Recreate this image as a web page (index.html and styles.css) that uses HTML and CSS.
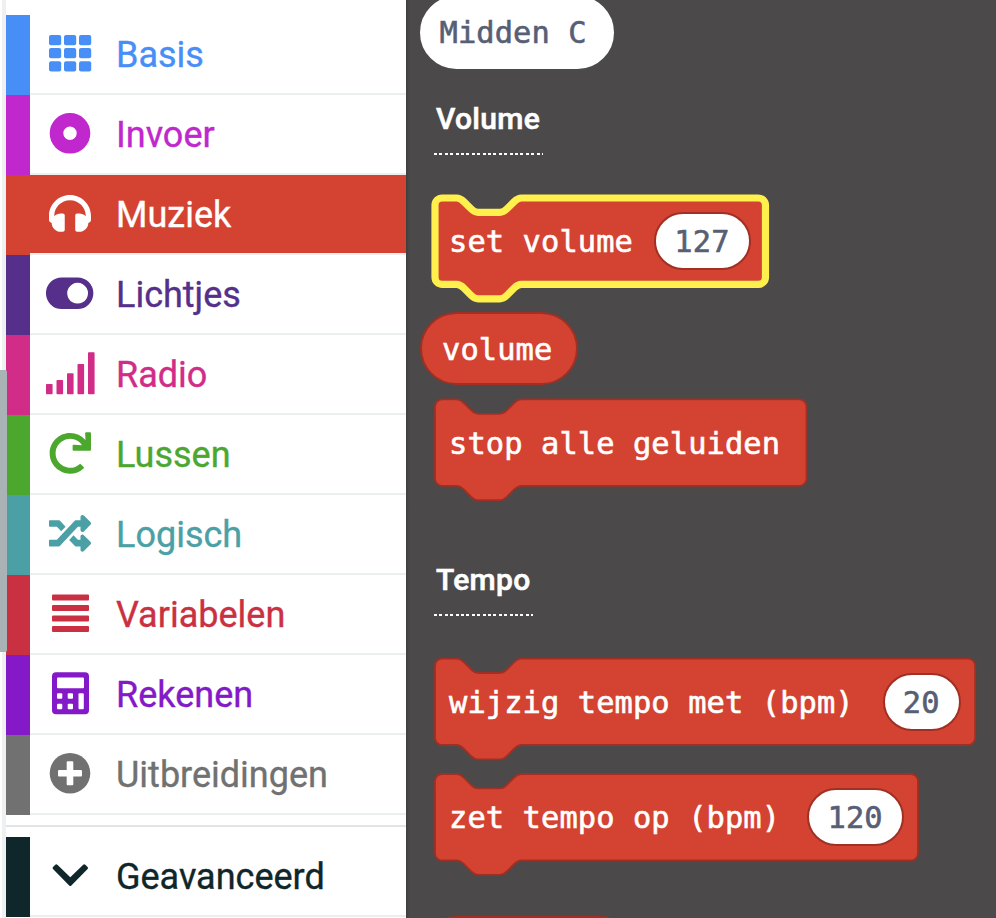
FILE: index.html
```html
<!DOCTYPE html>
<html lang="nl">
<head>
<meta charset="utf-8">
<title>Muziek</title>
<link rel="stylesheet" href="styles.css">
</head>
<body>
<div class="editor">
  <nav class="toolbox">
    <div class="category basis"><div class="cell"><svg class="icon" viewBox="0 0 50 50"><g><rect x="4" y="6" width="12.2" height="10.3" rx="2"/><rect x="19" y="6" width="12.2" height="10.3" rx="2"/><rect x="34" y="6" width="12.2" height="10.3" rx="2"/><rect x="4" y="19" width="12.2" height="10.3" rx="2"/><rect x="19" y="19" width="12.2" height="10.3" rx="2"/><rect x="34" y="19" width="12.2" height="10.3" rx="2"/><rect x="4" y="32.2" width="12.2" height="10.3" rx="2"/><rect x="19" y="32.2" width="12.2" height="10.3" rx="2"/><rect x="34" y="32.2" width="12.2" height="10.3" rx="2"/></g></svg><span>Basis</span></div></div>
    <div class="category invoer"><div class="cell"><svg class="icon" viewBox="0 0 50 50"><circle cx="25" cy="24.3" r="13.5" fill="none" stroke="currentColor" stroke-width="13.6"/></svg><span>Invoer</span></div></div>
    <div class="category muziek selected"><div class="cell"><svg class="icon" viewBox="0 0 50 50"><path transform="translate(4 3.4) scale(.082)" d="M256 32C114.52 32 0 146.497 0 288v48a32 32 0 0 0 17.689 28.622l14.383 7.191C34.083 431.903 83.421 480 144 480h24c13.255 0 24-10.745 24-24V280c0-13.255-10.745-24-24-24h-24c-31.342 0-59.671 12.879-80 33.627V288c0-105.869 86.131-192 192-192s192 86.131 192 192v1.627C427.671 268.879 399.342 256 368 256h-24c-13.255 0-24 10.745-24 24v176c0 13.255 10.745 24 24 24h24c60.579 0 109.917-48.098 111.928-108.187l14.382-7.191A32 32 0 0 0 512 336v-48c0-141.479-114.496-256-256-256z"/></svg><span>Muziek</span></div></div>
    <div class="category lichtjes"><div class="cell"><svg class="icon" viewBox="0 0 50 50"><path fill-rule="evenodd" d="M16.7 8.5H32.6a15.75 15.75 0 0 1 0 31.5H16.7a15.75 15.75 0 0 1 0-31.5zM32.6 13.8a10.4 10.4 0 1 0 .01 0z"/></svg><span>Lichtjes</span></div></div>
    <div class="category radio"><div class="cell"><svg class="icon" viewBox="0 0 50 50"><rect x="1" y="35" width="6.6" height="10.2" rx=".8"/><rect x="11.5" y="31" width="6.6" height="14.2" rx=".8"/><rect x="22" y="24.3" width="6.6" height="20.9" rx=".8"/><rect x="32.5" y="15" width="6.6" height="30.2" rx=".8"/><rect x="43" y="3.3" width="6.6" height="41.9" rx=".8"/></svg><span>Radio</span></div></div>
    <div class="category lussen"><div class="cell"><svg class="icon" viewBox="0 0 50 50"><path transform="translate(4 3.3) scale(.082)" d="M500.33 0h-47.41a12 12 0 0 0-12 12.57l4 82.76A247.42 247.42 0 0 0 256 8C119.34 8 7.9 119.53 8 256.19 8.1 393.07 119.1 504 256 504a247.1 247.1 0 0 0 166.18-63.91 12 12 0 0 0 .48-17.43l-34-34a12 12 0 0 0-16.38-.55A176 176 0 1 1 402.1 157.8l-101.53-4.87a12 12 0 0 0-12.57 12v47.41a12 12 0 0 0 12 12h200.33a12 12 0 0 0 12-12V12a12 12 0 0 0-12-12z"/></svg><span>Lussen</span></div></div>
    <div class="category logisch"><div class="cell"><svg class="icon" viewBox="0 0 50 50"><path transform="translate(4 3.3) scale(.082)" d="M504.971 359.029c9.373 9.373 9.373 24.569 0 33.941l-80 79.984c-15.01 15.01-40.971 4.49-40.971-16.971V416h-58.785a12.004 12.004 0 0 1-8.773-3.812l-70.556-75.596 53.333-57.143L352 336h32v-39.981c0-21.438 25.943-31.998 40.971-16.971l80 79.981zM12 176h84l52.781 56.551 53.333-57.143-70.556-75.596A11.999 11.999 0 0 0 122.785 96H12c-6.627 0-12 5.373-12 12v56c0 6.627 5.373 12 12 12zm372 0v39.984c0 21.46 25.961 31.98 40.971 16.971l80-79.984c9.373-9.373 9.373-24.569 0-33.941l-80-79.981C409.943 24.021 384 34.582 384 56.019V96h-58.785a12.004 12.004 0 0 0-8.773 3.812L96 336H12c-6.627 0-12 5.373-12 12v56c0 6.627 5.373 12 12 12h110.785c3.326 0 6.503-1.381 8.773-3.812L352 176h32z"/></svg><span>Logisch</span></div></div>
    <div class="category variabelen"><div class="cell"><svg class="icon" viewBox="0 0 50 50"><rect x="7" y="5.4" width="37" height="6" rx="1"/><rect x="7" y="15.9" width="37" height="6" rx="1"/><rect x="7" y="26.5" width="37" height="6" rx="1"/><rect x="7" y="37" width="37" height="6" rx="1"/></svg><span>Variabelen</span></div></div>
    <div class="category rekenen"><div class="cell"><svg class="icon" viewBox="0 0 50 50"><rect x="7" y="3.3" width="37" height="42" rx="4"/><g fill="#fff"><rect x="12" y="8.6" width="27" height="10.6" rx="1"/><rect x="12" y="24.3" width="5.3" height="5.4" rx="1"/><rect x="22.7" y="24.3" width="5.3" height="5.4" rx="1"/><rect x="12" y="34.8" width="5.3" height="5.4" rx="1"/><rect x="22.7" y="34.8" width="5.3" height="5.4" rx="1"/><rect x="33.5" y="24.3" width="5.3" height="15.9" rx="1"/></g></svg><span>Rekenen</span></div></div>
    <div class="category uitbreidingen"><div class="cell"><svg class="icon" viewBox="0 0 50 50"><circle cx="25" cy="24.2" r="20.3"/><path fill="#fff" d="M22.7 12.2h4.6a1 1 0 0 1 1 1v7.7h7.7a1 1 0 0 1 1 1v4.6a1 1 0 0 1-1 1h-7.7v7.7a1 1 0 0 1-1 1h-4.6a1 1 0 0 1-1-1v-7.7H14a1 1 0 0 1-1-1v-4.6a1 1 0 0 1 1-1h7.7v-7.7a1 1 0 0 1 1-1z"/></svg><span>Uitbreidingen</span></div></div>
    <div class="separator"></div>
    <div class="category geavanceerd"><div class="cell"><svg class="icon" viewBox="0 0 50 50"><path d="M8 18.1a1.5 1.5 0 0 1 0-2l2.3-2.3a1.5 1.5 0 0 1 2.1 0L25.3 26.3 38.2 13.8a1.5 1.5 0 0 1 2.1 0l2.3 2.3a1.5 1.5 0 0 1 0 2L26.4 34.4a1.5 1.5 0 0 1-2.2 0z"/></svg><span>Geavanceerd</span></div></div>
    <div class="scroll-thumb"></div>
  </nav>

  <main class="flyout">
    <div class="reporter note">Midden C</div>
    <h2 class="group">Volume</h2>
    <div class="block set-volume">
      <svg class="shape" width="345" height="116"><path class="glow" transform="translate(4 4) scale(1.8)" d="M0 4a4 4 0 0 1 4-4h8c2 0 3 1 4 2l4 4c1 1 2 2 4 2h12c2 0 3-1 4-2l4-4c1-1 2-2 4-2h131.6a4 4 0 0 1 4 4v40a4 4 0 0 1-4 4H48c-2 0-3 1-4 2l-4 4c-1 1-2 2-4 2H24c-2 0-3-1-4-2l-4-4c-1-1-2-2-4-2H4a4 4 0 0 1-4-4z"/></svg>
      <span>set volume</span><span class="value">127</span>
    </div>
    <div class="reporter volume">volume</div>
    <div class="block stop">
      <svg class="shape" width="385" height="116"><path transform="translate(4 4.4) scale(1.8)" d="M0 4a4 4 0 0 1 4-4h8c2 0 3 1 4 2l4 4c1 1 2 2 4 2h12c2 0 3-1 4-2l4-4c1-1 2-2 4-2h154.4a4 4 0 0 1 4 4v40a4 4 0 0 1-4 4H48c-2 0-3 1-4 2l-4 4c-1 1-2 2-4 2H24c-2 0-3-1-4-2l-4-4c-1-1-2-2-4-2H4a4 4 0 0 1-4-4z"/></svg>
      <span>stop alle geluiden</span>
    </div>
    <h2 class="group tempo">Tempo</h2>
    <div class="block change">
      <svg class="shape" width="552" height="116"><path transform="translate(4 3.6) scale(1.8)" d="M0 4a4 4 0 0 1 4-4h8c2 0 3 1 4 2l4 4c1 1 2 2 4 2h12c2 0 3-1 4-2l4-4c1-1 2-2 4-2h248.1a4 4 0 0 1 4 4v40a4 4 0 0 1-4 4H48c-2 0-3 1-4 2l-4 4c-1 1-2 2-4 2H24c-2 0-3-1-4-2l-4-4c-1-1-2-2-4-2H4a4 4 0 0 1-4-4z"/></svg>
      <span>wijzig tempo met (bpm)</span><span class="value">20</span>
    </div>
    <div class="block put">
      <svg class="shape" width="495" height="116"><path transform="translate(4 4) scale(1.8)" d="M0 4a4 4 0 0 1 4-4h8c2 0 3 1 4 2l4 4c1 1 2 2 4 2h12c2 0 3-1 4-2l4-4c1-1 2-2 4-2h216.3a4 4 0 0 1 4 4v40a4 4 0 0 1-4 4H48c-2 0-3 1-4 2l-4 4c-1 1-2 2-4 2H24c-2 0-3-1-4-2l-4-4c-1-1-2-2-4-2H4a4 4 0 0 1-4-4z"/></svg>
      <span>zet tempo op (bpm)</span><span class="value">120</span>
    </div>
    <div class="reporter next"></div>
  </main>
</div>
</body>
</html>
```
FILE: styles.css
```css
* {
  box-sizing: border-box;
}

body {
  margin: 0;
  overflow: hidden;
}

.editor {
  display: flex;
  width: 996px;
  height: 918px;
  overflow: hidden;
}

/* Category list */
.toolbox {
  position: relative;
  flex: none;
  width: 406px;
  height: 918px;
  padding: 15px 0 0 6px;
  background: linear-gradient(to right, #fff 2px, #eff0f2 2px, #eff0f2 6px, #fff 6px);
  font-family: Roboto, sans-serif;
  font-size: 36px;
}

.scroll-thumb {
  position: absolute;
  left: 0;
  top: 370px;
  width: 7px;
  height: 282px;
  background: #a9b3b5;
  border-radius: 0 2px 2px 0;
}

.category {
  height: 80px;
  padding-left: 24px;
  background: var(--color);
  color: var(--color);
}

.cell {
  display: flex;
  align-items: center;
  gap: 21px;
  height: 80px;
  padding-left: 15px;
  background: #fff;
  border-bottom: 2px solid #ebefef;
}

.cell span {
  padding-top: 2px;
  line-height: 42px;
  -webkit-text-stroke: 0.35px currentColor;
}

.selected .cell {
  background: var(--color);
  background-clip: padding-box;
  color: #fff;
}

.icon {
  flex: none;
  width: 50px;
  height: 50px;
  fill: currentColor;
}

.separator {
  height: 22px;
  padding-top: 10px;
}

.separator::before {
  content: "";
  display: block;
  height: 2px;
  background: #e2e3e4;
}

.basis { --color: #478ff7; }
.invoer { --color: #c028cd; }
.muziek { --color: #d44332; }
.lichtjes { --color: #562f8b; }
.radio { --color: #d12d88; }
.lussen { --color: #4ca72f; }
.logisch { --color: #4aa0a5; }
.variabelen { --color: #c93142; }
.rekenen { --color: #8419c7; }
.uitbreidingen { --color: #717171; }
.geavanceerd { --color: #0f272a; }

/* Block flyout */
.flyout {
  flex: 1;
  display: flex;
  flex-direction: column;
  align-items: flex-start;
  height: 918px;
  padding-left: 29px;
  overflow: hidden;
  background: linear-gradient(to right, #403e3e, #4b4949 4px);
  color: #fff;
  font-family: "DejaVu Sans Mono", monospace;
  font-size: 30.4px;
  letter-spacing: 0.1px;
  line-height: 36px;
  white-space: pre;
  -webkit-text-stroke: 0.6px currentColor;
}

.reporter {
  flex: none;
  display: flex;
  align-items: center;
  height: 73px;
  margin-left: -15px;
  padding-left: 22px;
  border: 2px solid #a22f23;
  border-radius: 36.5px;
  background: #d44332;
}

.note {
  width: 194px;
  margin: -4px 0 0 -15.5px;
  padding: 1px 0 0 18px;
  border-color: #fff;
  background: #fff;
  color: #575e75;
}

.volume {
  width: 158px;
  margin-top: 28px;
  padding: 2px 0 0 20px;
}

.next {
  width: 217px;
  margin-top: 56px;
}

.group {
  flex: none;
  height: 55px;
  margin: 31px 0 0 -1px;
  padding: 0 2.5px 0 2px;
  background: repeating-linear-gradient(to right, #fff 0 2.9px, transparent 2.9px 5.4px) 0 100% / 100% 2px no-repeat;
  font: 500 30px/38px Roboto, sans-serif;
  letter-spacing: 0.3px;
}

.block {
  position: relative;
  flex: none;
  display: flex;
  align-items: center;
  height: 86px;
  padding-left: 14px;
}

.block > span {
  position: relative;
}

.block > span:not(.value) {
  padding-top: 2px;
}

.shape {
  position: absolute;
  left: -4px;
  top: -4px;
  fill: #d44332;
  stroke: #a22f23;
  stroke-width: 1px;
}

.shape .glow {
  stroke: #fff04e;
  stroke-width: 4px;
}

.value {
  display: flex;
  align-items: center;
  justify-content: center;
  width: 97px;
  height: 58px;
  margin-left: 21px;
  padding: 1px 1px 0 0;
  border: 2px solid #a22f23;
  border-radius: 29px;
  background: #fff;
  color: #575e75;
}

.set-volume {
  margin-top: 43px;
}

.stop {
  margin-top: 14px;
}

.block.stop > span {
  padding-top: 4px;
}

.tempo {
  margin-top: 76px;
}

.change {
  margin-top: 43px;
}

.change .value {
  width: 78px;
  margin-left: 29px;
}

.put {
  margin-top: 29px;
}

.put .value {
  margin-left: 27px;
}
```
